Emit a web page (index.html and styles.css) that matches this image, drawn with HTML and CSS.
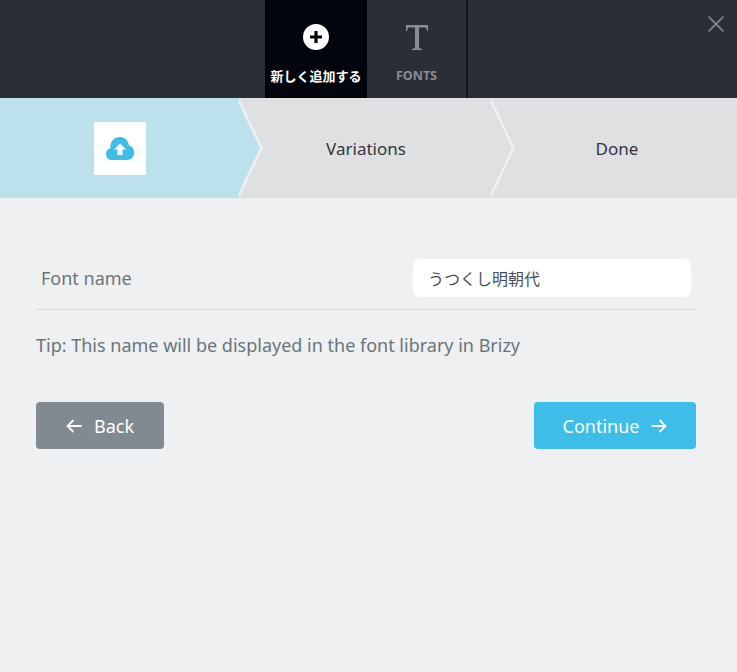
FILE: index.html
```html
<!DOCTYPE html>
<html lang="en">

<head>
  <meta charset="UTF-8">
  <meta name="viewport" content="width=device-width, initial-scale=1.0">
  <title>Add Font</title>
  <link rel="stylesheet" href="styles.css">
</head>

<body>
  <div class="modal">
    <header class="tabs">
      <div class="tab tab-active">
        <svg class="tab-icon" width="26" height="26" viewBox="0 0 26 26">
          <circle cx="13" cy="13" r="13" fill="#fff"/>
          <path d="M13 7v12M7 13h12" stroke="#02050c" stroke-width="3.2" fill="none"/>
        </svg>
        <span class="tab-label">新しく追加する</span>
      </div>
      <div class="tab tab-fonts">
        <svg class="tab-icon" width="26" height="28" viewBox="0 0 26 28">
          <path d="M2 8V2h22v6h-1l-1-3.500h-7V25l3 1v1H8v-1l3-1V4.500H4L3 8z" fill="#8b8d91"/>
        </svg>
        <span class="tab-label">FONTS</span>
      </div>
      <svg class="close" width="18" height="18" viewBox="0 0 18 18">
        <path d="M1.500 1.500l15 15M16.500 1.500l-15 15" stroke="#8e9095" stroke-width="1.600" fill="none"/>
      </svg>
    </header>

    <div class="steps">
      <div class="step step-active">
        <div class="upload-box">
          <svg width="28" height="23" viewBox="0 0 28 23">
            <path d="M6 23a6 6 0 0 1-1.500-11.800A9.500 9.500 0 0 1 14 0a9 9 0 0 1 9 8.500A7.500 7.500 0 0 1 22 23z" fill="#3dbde8"/>
            <path d="M14 6.500l6 6h-3.500V18h-5v-5.500H8z" fill="#fff"/>
          </svg>
        </div>
      </div>
      <div class="step">Variations</div>
      <div class="step step-last">Done</div>
    </div>

    <form class="content">
      <div class="field">
        <label class="field-label" for="fontName">Font name</label>
        <input type="text" id="fontName" class="field-input" value="うつくし明朝代">
      </div>
      <p class="tip">Tip: This name will be displayed in the font library in Brizy</p>
      <div class="actions">
        <button type="button" class="btn btn-back">
          <svg width="16" height="14" viewBox="0 0 16 14"><path d="M15.500 7H1.500M7.500 1l-6 6 6 6" stroke="#fff" stroke-width="1.800" fill="none"/></svg>
          Back
        </button>
        <button type="button" class="btn btn-continue">
          Continue
          <svg width="16" height="14" viewBox="0 0 16 14"><path d="M.5 7h14M8.500 1l6 6-6 6" stroke="#fff" stroke-width="1.800" fill="none"/></svg>
        </button>
      </div>
    </form>
  </div>
</body>

</html>
```

FILE: styles.css
```css
* {
  box-sizing: border-box;
}

body {
  margin: 0;
  background-color: #eef0f2;
  font-family: "Noto Sans", "Noto Sans CJK JP", sans-serif;
}

.modal {
  min-height: 672px;
  background-color: #eef0f2;
}

/* top bar */
.tabs {
  position: relative;
  display: flex;
  height: 98px;
  padding-left: 265px;
  background-color: #2a2e37;
}

.tab {
  display: flex;
  flex-direction: column;
  align-items: center;
  padding-top: 24px;
  width: 102px;
}

.tab-active {
  background-color: #02050c;
  color: #fff;
}

.tab-fonts {
  width: 101px;
  padding-top: 23px;
  border-right: 2px solid #14161b;
  color: #8b8d91;
}

.tab-icon {
  display: block;
}

.tab-label {
  margin-top: 16px;
  font-family: "Noto Sans CJK JP", sans-serif;
  font-size: 13px;
  font-weight: 700;
  line-height: 19px;
}

.tab-fonts .tab-label {
  margin-top: 15px;
  font-family: "Noto Sans", sans-serif;
  font-size: 12.500px;
}

.close {
  position: absolute;
  top: 15px;
  right: 12px;
}

/* steps */
.steps {
  display: flex;
  height: 100px;
  background-color: #dfe0e2;
}

.step {
  position: relative;
  display: flex;
  align-items: center;
  justify-content: center;
  width: 252px;
  font-size: 17px;
  color: #33363d;
}

.step::before,
.step::after {
  content: "";
  position: absolute;
  top: 0;
  bottom: 0;
  width: 24px;
  clip-path: polygon(0 0, 100% 50%, 0 100%);
}

.step::before {
  left: 100%;
  margin-left: -1px;
  background-color: #eef0f2;
}

.step::after {
  left: 100%;
  margin-left: -4px;
  background-color: #dfe0e2;
}

.step-active {
  width: 240px;
  background-color: #bce0ec;
  box-shadow: inset -1px 0 0 #b0d7e5;
}

.step-active::after {
  background-color: #bce0ec;
}

.step-last {
  flex: 1;
  padding-left: 5px;
}

.step-last::before,
.step-last::after {
  display: none;
}

.upload-box {
  position: relative;
  z-index: 1;
  display: flex;
  align-items: center;
  justify-content: center;
  width: 52px;
  height: 53px;
  background-color: #fff;
}

/* form */
.content {
  padding: 61px 41px 0 36px;
}

.field {
  display: flex;
  align-items: center;
  justify-content: space-between;
  height: 51px;
  padding: 0 5px 12px;
  border-bottom: 1px solid #d5d7d9;
}

.field-label {
  font-size: 18px;
  color: #6b757c;
}

.field-input {
  width: 278px;
  height: 38px;
  padding: 0 15px;
  border: none;
  border-radius: 8px;
  background-color: #fff;
  font-family: "Noto Sans CJK JP", sans-serif;
  font-size: 16px;
  color: #4a4f57;
}

.tip {
  margin: 22px 0 0;
  font-size: 18px;
  line-height: 26px;
  color: #6b757c;
}

.actions {
  display: flex;
  justify-content: space-between;
  margin-top: 44px;
}

.btn {
  display: flex;
  align-items: center;
  justify-content: center;
  gap: 12px;
  height: 47px;
  border: none;
  border-radius: 4px;
  font-family: inherit;
  font-size: 18px;
  color: #fff;
}

.btn-back {
  width: 128px;
  background-color: #828a91;
}

.btn-continue {
  width: 162px;
  background-color: #3dbde8;
}
```
